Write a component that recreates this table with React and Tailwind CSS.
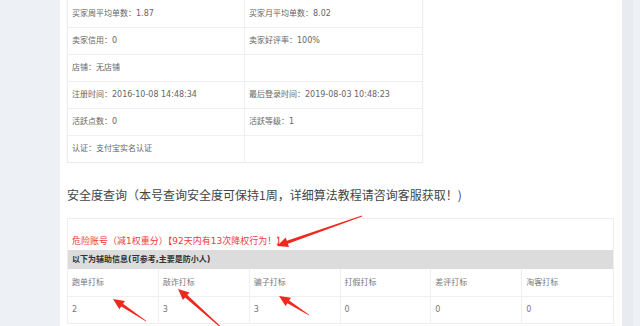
import React from 'react';

const infoRows = [
  ['买家周平均单数：1.87', '买家月平均单数：8.02'],
  ['卖家信用：0', '卖家好评率：100%'],
  ['店铺：无店铺', ''],
  ['注册时间：2016-10-08 14:48:34', '最后登录时间：2019-08-03 10:48:23'],
  ['活跃点数：0', '活跃等级：1'],
  ['认证：支付宝实名认证', '']
];

const marks = [
  { label: '跑单打标', value: 2 },
  { label: '敲诈打标', value: 3 },
  { label: '骗子打标', value: 3 },
  { label: '打假打标', value: 0 },
  { label: '差评打标', value: 0 },
  { label: '淘客打标', value: 0 }
];

// red pointer arrows, page coordinates [tailX, tailY, tipX, tipY]
const arrows = [
  [362, 216, 277, 246],
  [146, 321, 113, 299],
  [224, 330, 178, 289],
  [309, 315, 279, 296]
];

function arrowPoints([x1, y1, x2, y2]) {
  const dx = x2 - x1;
  const dy = y2 - y1;
  const len = Math.hypot(dx, dy);
  const ux = dx / len;
  const uy = dy / len;
  const nx = -uy;
  const ny = ux;
  const head = 11;
  const bx = x2 - ux * head;
  const by = y2 - uy * head;
  const p = (x, y) => `${x.toFixed(1)},${y.toFixed(1)}`;
  return [
    p(x1 + nx * 0.4, y1 + ny * 0.4),
    p(bx + nx * 1.6, by + ny * 1.6),
    p(bx + nx * 5, by + ny * 5),
    p(x2, y2),
    p(bx - nx * 5, by - ny * 5),
    p(bx - nx * 1.6, by - ny * 1.6),
    p(x1 - nx * 0.4, y1 - ny * 0.4)
  ].join(' ');
}

export default function App() {
  return (
    <div
      className="relative flex h-[326px] w-[640px] overflow-hidden bg-[#edf0f4]"
      style={{ fontFamily: '"DejaVu Sans", "Noto Sans CJK SC", sans-serif' }}
    >
      <div className="w-[60px] shrink-0" />

      <div className="w-[562px] shrink-0 bg-white pl-[7px]">
        {/* account details */}
        <div className="-mt-px w-[356px] border border-[#ececec] shadow-[0_0_2px_rgba(0,0,0,0.04)]">
          {infoRows.map((row, i) => (
            <div key={i} className="flex h-[27px] border-t border-[#efefef] first:border-t-0">
              {row.map((cell, j) => (
                <div
                  key={j}
                  className={`flex w-1/2 items-center px-[4px] text-[8px] text-[#666] ${
                    j === 0 ? 'border-r border-[#efefef]' : ''
                  }`}
                >
                  {cell}
                </div>
              ))}
            </div>
          ))}
        </div>

        <h2
          className="mt-[23px] h-[18px] text-[12px] leading-[18px] text-[#444]"
          style={{ fontFamily: '"Noto Sans CJK SC", sans-serif' }}
        >
          安全度查询（本号查询安全度可保持1周，详细算法教程请咨询客服获取！)
        </h2>

        {/* security check */}
        <div className="mt-[14px] w-[547px] border border-[#eeeeee]">
          <div className="flex h-[31px] items-end px-[4px] pb-[2px] text-[9px] text-[#f03a3a]">
            危险账号（减1权重分）【92天内有13次降权行为！】
          </div>
          <div className="flex h-[19px] items-center bg-[#dcdcdc] px-[4px] text-[8px] font-semibold text-[#333]">
            以下为辅助信息(可参考,主要是防小人)
          </div>
          <div className="grid grid-cols-6">
            {marks.map((m, i) => (
              <div
                key={m.label}
                className={`flex h-[27px] items-center px-[4px] text-[8px] text-[#777] ${
                  i < 5 ? 'border-r border-[#efefef]' : ''
                }`}
              >
                {m.label}
              </div>
            ))}
            {marks.map((m, i) => (
              <div
                key={m.label + '-v'}
                className={`flex h-[27px] items-center border-t border-[#efefef] px-[4px] text-[8px] text-[#777] ${
                  i < 5 ? 'border-r border-[#efefef]' : ''
                }`}
              >
                {m.value}
              </div>
            ))}
          </div>
        </div>
      </div>

      <div className="flex w-[18px] shrink-0">
        <div className="w-[11px] bg-[#e8ecf1]" />
        <div className="flex-1 bg-[#eef1f5]" />
      </div>

      <svg className="pointer-events-none absolute inset-0" width="640" height="326">
        {arrows.map((a, i) => (
          <polygon key={i} points={arrowPoints(a)} fill="#ee2a1f" />
        ))}
      </svg>
    </div>
  );
}
